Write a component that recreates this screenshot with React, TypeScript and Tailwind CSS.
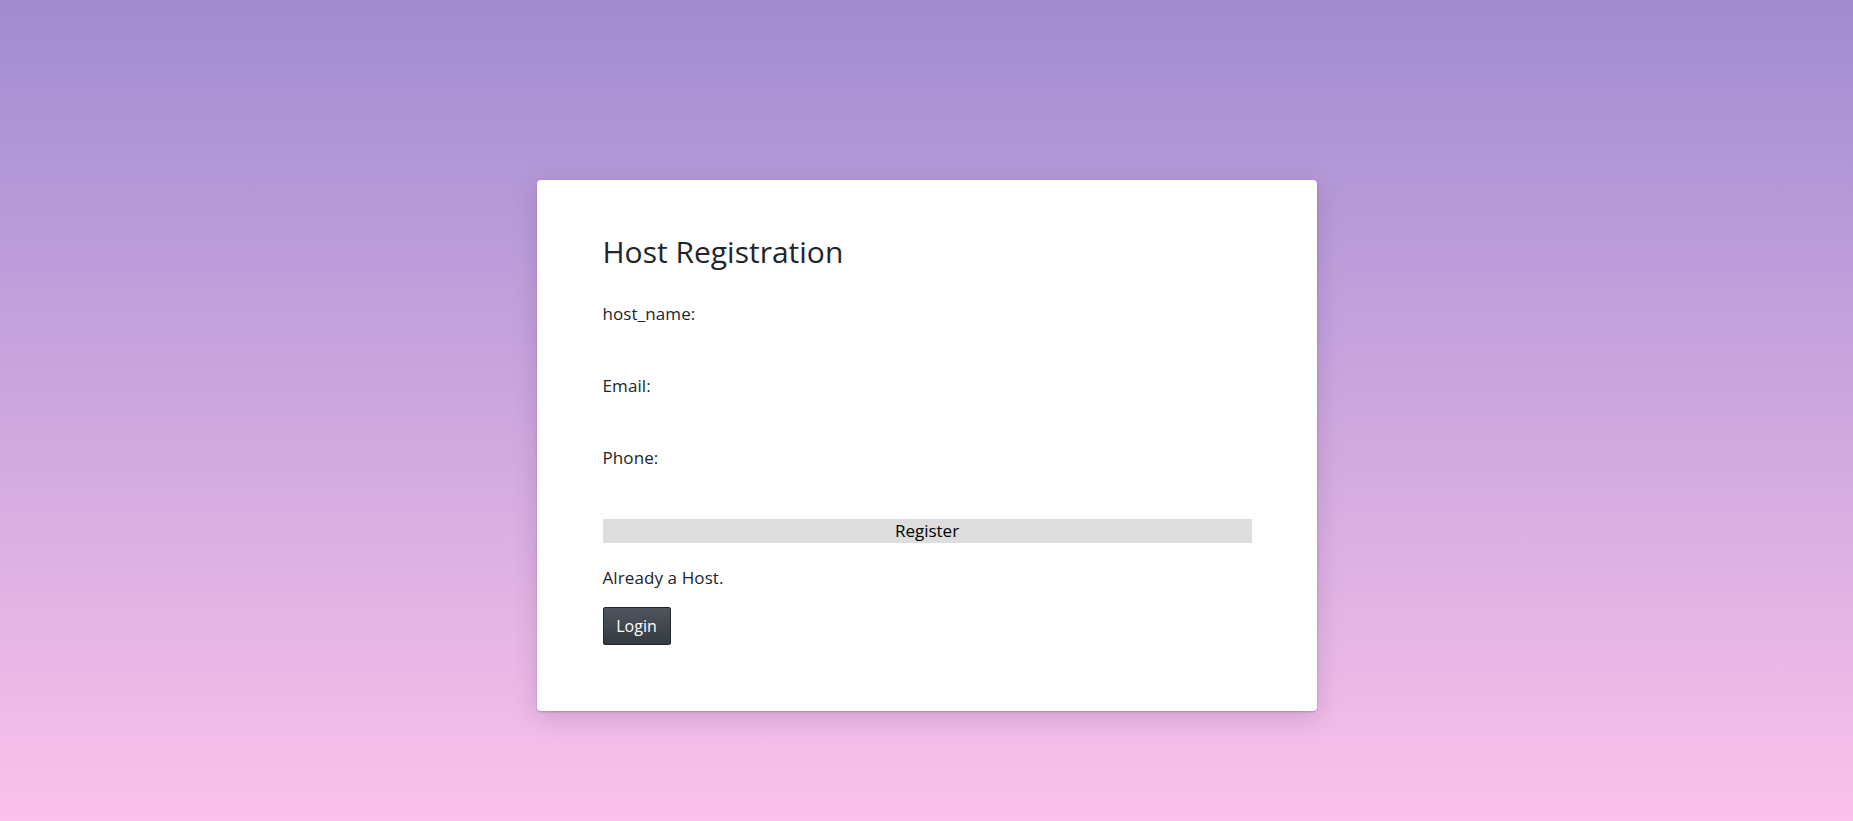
export default function App() {
  const fields = ["host_name:", "Email:", "Phone:"];

  return (
    <div className="min-h-screen w-full bg-gradient-to-b from-[#a18cd1] to-[#fbc2eb] pt-[180px] font-['Open_Sans',sans-serif] text-[#212529]">
      <div className="mx-auto w-[780px] rounded-[4px] bg-white pl-[66px] pr-[65px] pt-[54px] pb-[66px] shadow-[0_6px_24px_rgba(60,20,90,0.18),0_1px_2px_rgba(0,0,0,0.2)]">
        <h2 className="mb-[32px] text-[30px] leading-[36px]">Host Registration</h2>

        <form onSubmit={(e) => e.preventDefault()}>
          {fields.map((label) => (
            <div key={label} className="h-[72px]">
              <label className="block text-[17px] leading-[24px] tracking-[0.1px]">{label}</label>
            </div>
          ))}
          <button
            type="submit"
            className="mt-px block h-[24px] w-full bg-[#dddddd] text-center text-[17px] leading-[24px] text-black"
          >
            Register
          </button>
        </form>

        <p className="mt-[23px] text-[17px] leading-[24px] tracking-[0.1px]">Already a Host.</p>

        <button
          type="button"
          className="mt-[17px] h-[38px] w-[68px] rounded-[2px] border border-[#23272b] bg-gradient-to-b from-[#50565e] to-[#343a40] text-[16px] text-white"
        >
          Login
        </button>
      </div>
    </div>
  );
}
